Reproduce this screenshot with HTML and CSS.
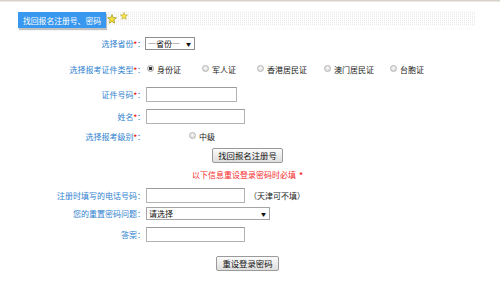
FILE: index.html
```html
<!DOCTYPE html>
<html lang="zh-CN">
<head>
<meta charset="utf-8">
<title>找回报名注册号、密码</title>
<link rel="stylesheet" href="styles.css">
</head>
<body>
<div class="topline"></div>
<div class="titlebar">
  <span class="tab">找回报名注册号、密码</span>
  <span class="dots">
    <svg class="star1" width="10" height="10" viewBox="0 0 10 10"><polygon points="5,0.6 6.2,3.6 9.4,3.8 6.9,5.9 7.7,9.2 5,7.4 2.3,9.2 3.1,5.9 0.6,3.8 3.8,3.6" fill="#f7e23a" stroke="#a89a2a" stroke-width="0.8" stroke-linejoin="round"/></svg>
    <svg class="star2" width="8" height="8" viewBox="0 0 10 10"><polygon points="5,0.6 6.2,3.6 9.4,3.8 6.9,5.9 7.7,9.2 5,7.4 2.3,9.2 3.1,5.9 0.6,3.8 3.8,3.6" fill="#f9e64a" stroke="#b8a838" stroke-width="0.8" stroke-linejoin="round"/></svg>
  </span>
</div>

<form class="form">
  <div class="row r1">
    <span class="lbl">选择省份<b>*</b>：</span>
    <span class="ctl"><span class="sel sel-prov"><select><option>—省份—</option></select></span></span>
  </div>
  <div class="row r2">
    <span class="lbl">选择报考证件类型<b>*</b>：</span>
    <span class="ctl radios">
      <label class="opt o1"><input type="radio" name="t" checked><span>身份证</span></label>
      <label class="opt o2"><input type="radio" name="t"><span>军人证</span></label>
      <label class="opt o3"><input type="radio" name="t"><span>香港居民证</span></label>
      <label class="opt o4"><input type="radio" name="t"><span>澳门居民证</span></label>
      <label class="opt"><input type="radio" name="t"><span>台胞证</span></label>
    </span>
  </div>
  <div class="row r3">
    <span class="lbl">证件号码<b>*</b>：</span>
    <span class="ctl"><input class="txt w91" type="text"></span>
  </div>
  <div class="row r4">
    <span class="lbl">姓名<b>*</b>：</span>
    <span class="ctl"><input class="txt w99" type="text"></span>
  </div>
  <div class="row r5">
    <span class="lbl">选择报考级别<b>*</b>：</span>
    <span class="ctl"><label class="opt lvl"><input type="radio" name="l"><span>中级</span></label></span>
  </div>
  <div class="center b1"><button type="button" class="btn">找回报名注册号</button></div>
  <div class="center notice">以下信息重设登录密码时必填 <b>*</b></div>
  <div class="row r6">
    <span class="lbl">注册时填写的电话号码：</span>
    <span class="ctl"><input class="txt w99" type="text"><span class="hint">（天津可不填）</span></span>
  </div>
  <div class="row r7">
    <span class="lbl">您的重置密码问题：</span>
    <span class="ctl"><span class="sel sel-q"><select><option>请选择</option></select></span></span>
  </div>
  <div class="row r8">
    <span class="lbl">答案：</span>
    <span class="ctl"><input class="txt w99" type="text"></span>
  </div>
  <div class="center b2"><button type="button" class="btn">重设登录密码</button></div>
</form>
</body>
</html>
```

FILE: styles.css
```css
html, body {
  margin: 0;
  padding: 0;
  background: #fff;
}
body {
  width: 500px;
  font-family: "Noto Sans CJK SC", "Liberation Sans", sans-serif;
  font-size: 8px;
  color: #1a1a1a;
}
.topline {
  height: 1px;
  background: #d6d2ca;
  border-bottom: 1px solid #ece9e4;
}
.titlebar {
  display: flex;
  align-items: flex-start;
  padding-left: 18px;
  margin-top: 9px;
  height: 20px;
}
.tab {
  display: flex;
  align-items: center;
  justify-content: center;
  width: 88px;
  height: 16px;
  margin-top: 1px;
  background: #3897ee;
  color: #fff;
  font-size: 7.8px;
  box-shadow: 1px 2px 1px rgba(120,120,120,0.45);
  position: relative;
  z-index: 1;
}
.dots {
  display: flex;
  align-items: flex-start;
  width: 369px;
  height: 15px;
  background:
    repeating-linear-gradient(0deg, rgba(255,255,255,0.7) 0 1px, transparent 1px 2px),
    repeating-linear-gradient(90deg, #ebebeb 0 1px, #fff 1px 2px);
}
.star1 { margin-top: 3px; margin-left: 1px; }
.star2 { margin-top: 1px; margin-left: 3px; }

.form { margin: 0; }
.row {
  display: flex;
  align-items: center;
}
.lbl {
  width: 145px;
  text-align: right;
  color: #2f82cf;
  white-space: nowrap;
}
.lbl b {
  color: #f01010;
  font-weight: bold;
  font-size: 7px;
}
.ctl {
  display: flex;
  align-items: center;
  margin-left: 1px;
}
.r1 { height: 25px; }
.r2 { height: 26px; }
.r3 { height: 25px; }
.r4 { height: 18px; }
.r5 { height: 23px; }
.r6 { height: 20px; }
.r7 { height: 17px; }
.r8 { height: 25px; }

.r1 .ctl { margin-left: 0; }

.sel {
  position: relative;
  display: inline-block;
}
.sel select {
  -webkit-appearance: none;
  appearance: none;
  display: block;
  height: 13px;
  margin: 0;
  padding: 0 0 0 2px;
  border: 1px solid #8e8e8e;
  border-radius: 0;
  background: #fff;
  font-family: inherit;
  font-size: 8px;
  line-height: 11px;
  color: #111;
}
.sel::after {
  content: "▼";
  position: absolute;
  top: 3px;
  font-size: 5px;
  line-height: 7px;
  color: #111;
  pointer-events: none;
}
.sel-prov select { width: 50px; }
.sel-prov::after { right: 4px; }
.sel-q select { width: 124px; border-color: #a5a5a5; }
.sel-q::after { right: 4px; }

.radios { margin-left: 2px; }
.o1, .o2 { margin-right: 21px; }
.o3 { margin-right: 17px; }
.o4 { margin-right: 16px; }
.opt {
  display: flex;
  align-items: center;
  white-space: nowrap;
}
.opt input {
  -webkit-appearance: none;
  appearance: none;
  width: 7px;
  height: 7px;
  margin: 0 3px 2px 0;
  border: 1px solid #b4b4b4;
  border-radius: 50%;
  background: radial-gradient(circle at 50% 40%, #fafafa, #d4d4d4);
}
.opt input:checked {
  border-color: #a6a6a6;
  background: radial-gradient(circle, #333 0 1.4px, #e6e6e6 1.8px);
}
.lvl { margin-left: 43px; }

.txt {
  box-sizing: border-box;
  height: 15px;
  margin: 0;
  padding: 0 2px;
  border: 1px solid #b3b3b3;
  border-top-color: #9c9c9c;
  background: #fff;
  font-size: 8px;
}
.w91 { width: 91px; }
.w99 { width: 99px; }
.hint { margin-left: 4px; }

.center {
  width: 495px;
  display: flex;
  justify-content: center;
  align-items: center;
}
.b1 { height: 15px; }
.b2 { height: 32px; }
.notice {
  height: 22px;
  color: #f42a2a;
}
.notice b { font-weight: bold; margin-left: 3px; }
.btn {
  box-sizing: border-box;
  height: 15px;
  margin: 0;
  padding: 0 5px;
  border: 1px solid #9a9a9a;
  border-radius: 2px;
  background: linear-gradient(#fbfbfb, #dedede);
  font-family: inherit;
  font-size: 8.4px;
  line-height: 13px;
  color: #111;
}
```
